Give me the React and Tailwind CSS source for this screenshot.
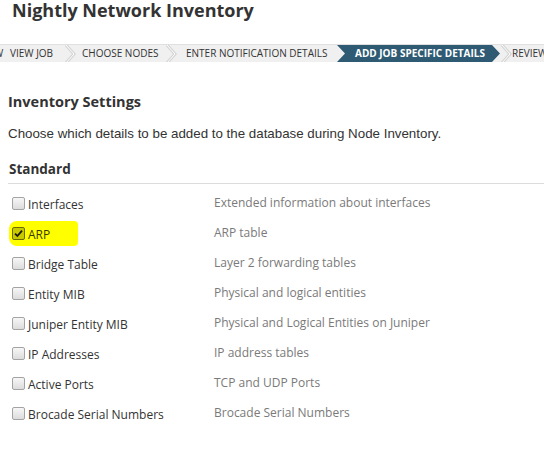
import React from 'react';

const rows = [
  { label: 'Interfaces', desc: 'Extended information about interfaces' },
  { label: 'ARP', desc: 'ARP table', checked: true },
  { label: 'Bridge Table', desc: 'Layer 2 forwarding tables' },
  { label: 'Entity MIB', desc: 'Physical and logical entities' },
  { label: 'Juniper Entity MIB', desc: 'Physical and Logical Entities on Juniper' },
  { label: 'IP Addresses', desc: 'IP address tables' },
  { label: 'Active Ports', desc: 'TCP and UDP Ports' },
  { label: 'Brocade Serial Numbers', desc: 'Brocade Serial Numbers' },
];

function Chevron() {
  return (
    <svg width="12" height="18" viewBox="0 0 12 18" className="shrink-0 block">
      <polyline points="2,0 10,9 2,18" fill="none" stroke="#d4d4d4" strokeWidth="3" />
      <polyline points="2,0 10,9 2,18" fill="none" stroke="#ffffff" strokeWidth="1" />
    </svg>
  );
}

function Checkbox({ checked }) {
  if (checked) {
    return (
      <span className="w-[13px] h-[13px] rounded-[2px] border border-[#6b6b00] bg-[#c9c900] flex items-center justify-center shrink-0">
        <svg width="9" height="9" viewBox="0 0 9 9" className="block">
          <path d="M1 4.6 L3.4 7 L8 1.6" fill="none" stroke="#1a1a00" strokeWidth="1.8" />
        </svg>
      </span>
    );
  }
  return (
    <span className="block w-[13px] h-[13px] rounded-[2px] border border-[#a3a3a3] bg-gradient-to-b from-[#f7f7f7] to-[#dcdcdc] shrink-0" />
  );
}

export default function App() {
  return (
    <div className="w-[544px] h-[454px] bg-white overflow-hidden relative font-['Open_Sans',sans-serif]">
      <h1 className="pl-[12px] h-[44px] text-[18px] font-bold text-[#333] leading-[20px]">
        Nightly Network Inventory
      </h1>

      <div className="flex items-center h-[18px] bg-[#f0f0f0] border-t border-[#e0e0e0] overflow-hidden whitespace-nowrap text-[10px] text-[#333] uppercase">
        <span className="ml-[-6px] w-[16px] shrink-0">W</span>
        <span className="w-[54px] shrink-0">View Job</span>
        <Chevron />
        <span className="ml-[6px] w-[83px] shrink-0">Choose Nodes</span>
        <Chevron />
        <span className="ml-[9px] w-[151px] shrink-0">Enter Notification Details</span>
        <div className="h-full w-[163px] shrink-0 bg-[#2e5a74] text-white font-bold flex items-center pl-[18px] [clip-path:polygon(0_0,calc(100%-8px)_0,100%_50%,calc(100%-8px)_100%,0_100%,8px_50%)]">
          Add Job Specific Details
        </div>
        <Chevron />
        <span className="ml-[0px] shrink-0">Review</span>
      </div>

      <div className="pl-[8px]">
        <h2 className="mt-[30px] text-[14.5px] font-bold text-[#333] leading-[20px]">Inventory Settings</h2>
        <p className="mt-[13px] text-[13.33px] text-[#333] leading-[18px] font-['Liberation_Sans',Arial,sans-serif]">
          Choose which details to be added to the database during Node Inventory.
        </p>
        <h3 className="mt-[16px] pl-[1px] text-[13.5px] font-bold text-[#333] leading-[20px]">Standard</h3>
        <div className="mt-[4px] border-t border-[#dcdcdc]" />
      </div>

      <div className="pt-[9px]">
        {rows.map((r) => (
          <div key={r.label} className="flex h-[30px] text-[12px] leading-[18px]">
            <div className="w-[214px] flex items-start pl-[12px] relative">
              {r.checked && (
                <span className="absolute left-[9px] top-[-2px] w-[69px] h-[25px] bg-[#ffff00] rounded-l-[8px] rounded-r-[4px]" />
              )}
              <span className="relative mt-[4px]">
                <Checkbox checked={r.checked} />
              </span>
              <span className={`relative ml-[3px] mt-[3px] ${r.checked ? 'text-[#3a3a00]' : 'text-[#333]'}`}>{r.label}</span>
            </div>
            <div className="mt-[1px] text-[#7a7a7a]">{r.desc}</div>
          </div>
        ))}
      </div>
    </div>
  );
}
